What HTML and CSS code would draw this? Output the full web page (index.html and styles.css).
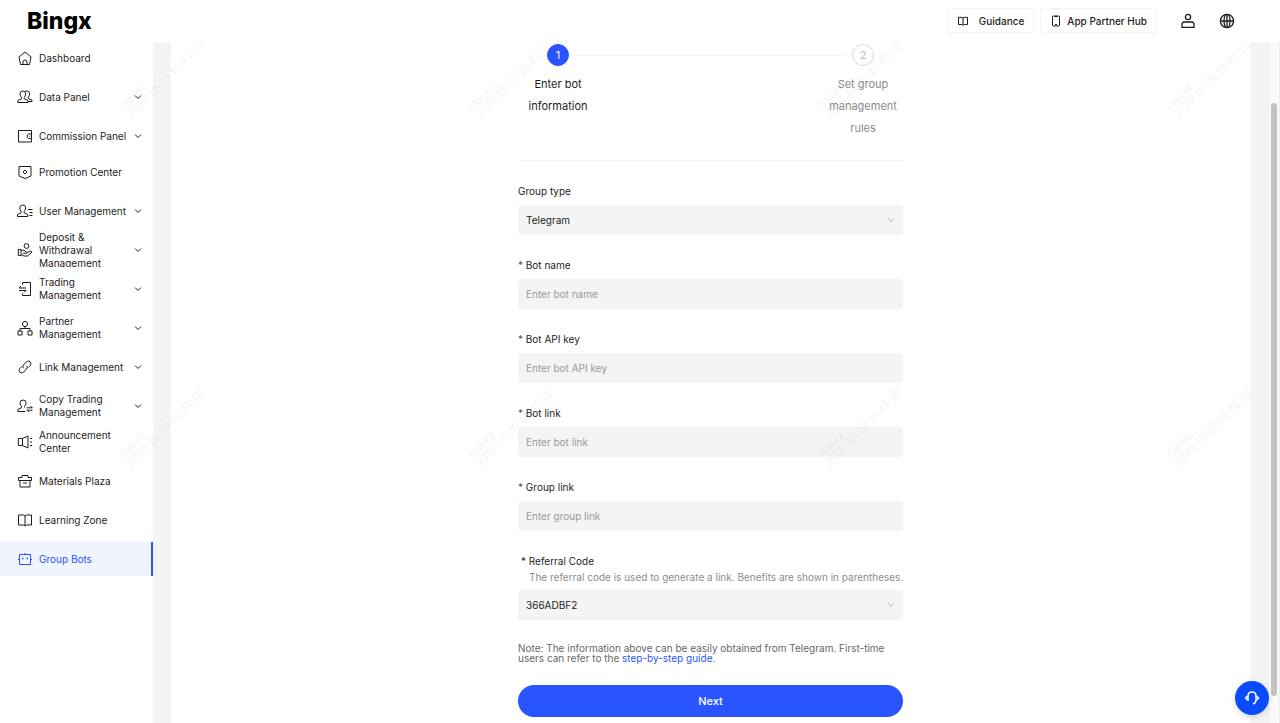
FILE: index.html
```html
<!DOCTYPE html>
<html lang="en">
<head>
    <meta charset="UTF-8">
    <meta name="viewport" content="width=device-width, initial-scale=1.0">
    <title>BingX - Group Bots</title>
    <link rel="stylesheet" href="styles.css">
</head>
<body>
    <header class="header">
        <a class="logo" href="#">Bingx</a>
        <div class="header-actions">
            <button class="header-button guidance" type="button">
                <svg class="small-icon" viewBox="0 0 12 12"><path d="M6 3Q5 2.300 4 2.300H1.500V9.500H4.500L6 10.200L7.500 9.500H10.500V2.300H8Q7 2.300 6 3ZM6 3V10"/></svg>
                Guidance
            </button>
            <button class="header-button" type="button">
                <svg class="small-icon" viewBox="0 0 12 12"><rect x="2.500" y="1" width="7" height="10" rx="1"/><path d="M4.500 1.500h3M5 9.500h2"/></svg>
                App Partner Hub
            </button>
        </div>
        <div class="header-links">
            <button class="icon-button" type="button" aria-label="Account">
                <svg class="icon bold" viewBox="0 0 16 16"><circle cx="8" cy="4" r="2.600"/><path d="M2 14.300V10.500L3.500 9H12.500L14 10.500V14.300Z"/></svg>
            </button>
            <button class="icon-button" type="button" aria-label="Language">
                <svg class="icon bold" viewBox="0 0 16 16"><circle cx="8" cy="8" r="6.600"/><ellipse cx="8" cy="8" rx="3" ry="6.600"/><path d="M1.400 8H14.600M8 1.400V14.600"/></svg>
            </button>
        </div>
    </header>

    <div class="layout">
        <nav class="sidebar">
            <ul class="menu">
                <li class="single"><a class="menu-item" href="#">
                    <svg class="icon" viewBox="0 0 16 16"><path d="M8 2L14 7L12.500 14.500H3.500L2 7ZM6 14.500V12a2 2 0 0 1 4 0V14.500"/></svg>
                    <span>Dashboard</span>
                </a></li>
                <li class="group"><a class="menu-item" href="#">
                    <svg class="icon" viewBox="0 0 16 16"><path d="M.800 13.500V11.500L4.500 9.800V8.500Q3 7 3 4.800Q3 2 5.800 2Q8.600 2 8.600 4.800Q8.600 7 7.200 8.500V9.800L11 11.500V13.500ZM8 2.300Q9 2 10 2Q12.600 2 12.600 4.800Q12.600 7 11.200 8.500V9.500L15 11V12.500H11"/></svg>
                    <span>Data Panel</span>
                    <svg class="chevron" viewBox="0 0 8 8"><path d="M1 2.500L4 5.500L7 2.500"/></svg>
                </a></li>
                <li class="group"><a class="menu-item" href="#">
                    <svg class="icon" viewBox="0 0 16 16"><path d="M14.500 6V2.500H1.500V14H14.500V10.500M14.500 6H11.500L10.200 7V9.500L11.500 10.500H14.500ZM12 8.200H13"/></svg>
                    <span>Commission Panel</span>
                    <svg class="chevron" viewBox="0 0 8 8"><path d="M1 2.500L4 5.500L7 2.500"/></svg>
                </a></li>
                <li class="single"><a class="menu-item" href="#">
                    <svg class="icon" viewBox="0 0 16 16"><path d="M2 2.500H14V12L8 14.500L2 12ZM8 6L10 8L8 10L6 8Z"/></svg>
                    <span>Promotion Center</span>
                </a></li>
                <li class="group"><a class="menu-item" href="#">
                    <svg class="icon" viewBox="0 0 16 16"><path d="M.500 13.500V11.500L4.200 9.800V8.500Q2.800 7 2.800 4.800Q2.800 2 5.700 2Q8.600 2 8.600 4.800Q8.600 7 7.200 8.500V9.800L10.800 11.500V13.500ZM11 6.500H15.500M12.500 9.500H15.500M12.500 12.500H15.500"/></svg>
                    <span>User Management</span>
                    <svg class="chevron" viewBox="0 0 8 8"><path d="M1 2.500L4 5.500L7 2.500"/></svg>
                </a></li>
                <li class="group"><a class="menu-item" href="#">
                    <svg class="icon" viewBox="0 0 16 16"><circle cx="9.500" cy="4" r="2.400"/><path d="M1.300 7.500H4V13.500H1.300ZM4 8.300H7L9 9.800Q10.300 10.500 9.500 11.300H6M10 10.500L13.500 9L15 10L10.500 14H7L4 12.500"/></svg>
                    <span>Deposit &amp; Withdrawal Management</span>
                    <svg class="chevron" viewBox="0 0 8 8"><path d="M1 2.500L4 5.500L7 2.500"/></svg>
                </a></li>
                <li class="group"><a class="menu-item" href="#">
                    <svg class="icon" viewBox="0 0 16 16"><path d="M5.500 3.500V1.500H13.500V14.500H5.500V12.500M4 5L2 7H9M2 9.500H9L7 11.500"/></svg>
                    <span>Trading Management</span>
                    <svg class="chevron" viewBox="0 0 8 8"><path d="M1 2.500L4 5.500L7 2.500"/></svg>
                </a></li>
                <li class="group"><a class="menu-item" href="#">
                    <svg class="icon" viewBox="0 0 16 16"><circle cx="8" cy="4" r="2.600"/><path d="M8 6.600V8.500M3 11V8.500H13V11M1 11H5V15H1ZM11 11H15V15H11Z"/></svg>
                    <span>Partner Management</span>
                    <svg class="chevron" viewBox="0 0 8 8"><path d="M1 2.500L4 5.500L7 2.500"/></svg>
                </a></li>
                <li class="group"><a class="menu-item" href="#">
                    <svg class="icon" viewBox="0 0 16 16"><path d="M6.500 9.200Q5 7.500 6.500 6L9.500 2.800Q11.300 1.300 13.200 2.800Q14.800 4.700 13.200 6.500L11 8.700M9.500 6.800Q11 8.500 9.500 10L6.500 13.200Q4.700 14.700 2.800 13.200Q1.200 11.300 2.800 9.500L5 7.300"/></svg>
                    <span>Link Management</span>
                    <svg class="chevron" viewBox="0 0 8 8"><path d="M1 2.500L4 5.500L7 2.500"/></svg>
                </a></li>
                <li class="group"><a class="menu-item" href="#">
                    <svg class="icon" viewBox="0 0 16 16"><path d="M8.500 13.500H.800V11.500L4.500 9.800V8.500Q3 7 3 4.800Q3 2 6 2Q9 2 9 4.800Q9 7 7.500 8.500V9.500M9.500 9.800H15.300L13.500 8M15.500 12.200H10L11.800 14"/></svg>
                    <span>Copy Trading Management</span>
                    <svg class="chevron" viewBox="0 0 8 8"><path d="M1 2.500L4 5.500L7 2.500"/></svg>
                </a></li>
                <li class="single"><a class="menu-item" href="#">
                    <svg class="icon" viewBox="0 0 16 16"><path d="M1.300 4.500H5.500L11 2V14L5.500 11.500H1.300ZM5.500 4.500V11.500M13 4.500H15M13 8H15M13 11.500H15"/></svg>
                    <span>Announcement Center</span>
                </a></li>
                <li class="single"><a class="menu-item" href="#">
                    <svg class="icon" viewBox="0 0 16 16"><path d="M1.500 4.500H5V2.500H11V4.500H14.500V7.500H1.500ZM3 7.500V14H13V7.500M6 10H10"/></svg>
                    <span>Materials Plaza</span>
                </a></li>
                <li class="single"><a class="menu-item" href="#">
                    <svg class="icon" viewBox="0 0 16 16"><path d="M8 4L6.500 3H1.500V13H6.500L8 14L9.500 13H14.500V3H9.500ZM8 4V14"/></svg>
                    <span>Learning Zone</span>
                </a></li>
                <li class="single"><a class="menu-item active" href="#" aria-current="page">
                    <svg class="icon" viewBox="0 0 16 16"><path d="M2.500 3.500H13.500V13.500H2.500ZM8 3.500V2M2.500 8.500H1M13.500 8.500H15"/><path class="eyes" d="M5 7.500H6.500M9.500 7.500H11"/></svg>
                    <span>Group Bots</span>
                </a></li>
            </ul>
        </nav>

        <main class="main">
            <section class="panel">
                <form class="bot-form">
                    <ol class="steps">
                        <li class="step current">
                            <span class="step-number">1</span>
                            <span>Enter bot information</span>
                        </li>
                        <li class="step-line" role="presentation"></li>
                        <li class="step">
                            <span class="step-number">2</span>
                            <span>Set group management rules</span>
                        </li>
                    </ol>

                    <div class="field">
                        <label for="group-type">Group type</label>
                        <div class="select-box">
                            <select id="group-type">
                                <option>Telegram</option>
                            </select>
                            <svg class="select-arrow" viewBox="0 0 8 8"><path d="M1 1.500L4 6L7 1.500"/></svg>
                        </div>
                    </div>
                    <div class="field">
                        <label for="bot-name"><span class="required">*</span> Bot name</label>
                        <input id="bot-name" type="text" placeholder="Enter bot name">
                    </div>
                    <div class="field">
                        <label for="api-key"><span class="required">*</span> Bot API key</label>
                        <input id="api-key" type="text" placeholder="Enter bot API key">
                    </div>
                    <div class="field">
                        <label for="bot-link"><span class="required">*</span> Bot link</label>
                        <input id="bot-link" type="text" placeholder="Enter bot link">
                    </div>
                    <div class="field">
                        <label for="group-link"><span class="required">*</span> Group link</label>
                        <input id="group-link" type="text" placeholder="Enter group link">
                    </div>
                    <div class="field">
                        <label class="referral-label" for="referral">* Referral Code</label>
                        <p class="hint">The referral code is used to generate a link. Benefits are shown in parentheses.</p>
                        <div class="select-box">
                            <select id="referral">
                                <option>366ADBF2</option>
                            </select>
                            <svg class="select-arrow" viewBox="0 0 8 8"><path d="M1 1.500L4 6L7 1.500"/></svg>
                        </div>
                    </div>

                    <p class="note">Note: The information above can be easily obtained from Telegram. First-time users can refer to the <a href="#">step-by-step guide.</a></p>
                    <button class="next-button" type="button">Next</button>
                </form>
            </section>
        </main>

        <div class="scrollbar"><div class="thumb"></div></div>
    </div>

    <div class="watermarks" aria-hidden="true">
        <p>clairez<br>2025-10-20 16:41:10</p>
        <p>clairez<br>2025-10-20 16:41:10</p>
        <p>clairez<br>2025-10-20 16:41:10</p>
        <p>clairez<br>2025-10-20 16:41:10</p>
        <p>clairez<br>2025-10-20 16:41:10</p>
        <p>clairez<br>2025-10-20 16:41:10</p>
        <p>clairez<br>2025-10-20 16:41:10</p>
        <p>clairez<br>2025-10-20 16:41:10</p>
    </div>

    <button class="support" type="button" aria-label="Customer support">
        <svg viewBox="0 0 16 16"><path d="M4 11V6Q4 2 8 2Q12 2 12 6V10Q12 13 9 14"/><path d="M3.500 6L1.500 8L3.500 10M12.500 6L14.500 8L12.500 10"/></svg>
    </button>
</body>
</html>
```

FILE: styles.css
```css
* {
    box-sizing: border-box;
}
body {
    margin: 0;
    height: 100vh;
    display: flex;
    flex-direction: column;
    overflow: hidden;
    background: white;
    color: #1c1c1c;
    font-family: Inter, "Liberation Sans", sans-serif;
    font-size: 10px;
}
button, input, select {
    font: inherit;
    color: inherit;
}
button {
    cursor: pointer;
}
a {
    text-decoration: none;
}
ul, ol, p {
    margin: 0;
    padding: 0;
    list-style: none;
}
svg {
    fill: none;
    stroke: currentColor;
    flex-shrink: 0;
}

/* Header */
.header {
    display: flex;
    align-items: center;
    flex: 0 0 42px;
    padding: 0 45px 1px 27px;
}
.logo {
    color: black;
    font-size: 23px;
    font-weight: 800;
    line-height: 24px;
}
.header-actions {
    display: flex;
    gap: 6px;
    margin-left: auto;
}
.header-button {
    display: flex;
    align-items: center;
    gap: 5px;
    height: 25px;
    padding: 0 9px;
    background: white;
    border: 1px solid #f3f3f3;
    border-radius: 4px;
    font-weight: 500;
}
.guidance {
    gap: 10px;
}
.small-icon {
    width: 12px;
    height: 12px;
}
.header-links {
    display: flex;
    gap: 23px;
    margin-left: 23px;
}
.icon-button {
    display: flex;
    padding: 0;
    border: none;
    background: none;
}
.icon {
    width: 16px;
    height: 16px;
}
.bold {
    stroke-width: 1.3;
}

/* Sidebar */
.layout {
    display: flex;
    flex: 1;
    min-height: 0;
}
.sidebar {
    width: 153px;
    flex-shrink: 0;
}
.menu {
    margin-top: -1px;
}
.menu li + li {
    margin-top: 5px;
}
.menu .group + .single {
    margin-top: 2px;
}
.menu-item {
    display: flex;
    align-items: center;
    gap: 6px;
    height: 34px;
    padding: 0 11px 0 17px;
    overflow: hidden;
    color: #1c1c1c;
    line-height: 13px;
}
.menu-item span {
    flex: 1;
}
.single .menu-item {
    padding-right: 24px;
}
.chevron {
    width: 8px;
    height: 8px;
}
.menu-item.active {
    color: #2954ff;
    background: #eff4ff;
    border-right: 2px solid #2954ff;
}
.eyes {
    stroke-width: 1.5;
}

/* Main */
.main {
    display: flex;
    flex: 1;
    padding: 0 18px;
    background: #f3f4f6;
}
.panel {
    flex: 1;
    padding: 2px 20px;
    background: white;
}
.bot-form {
    max-width: 385px;
    margin: 0 auto;
}
.steps {
    display: grid;
    grid-template-columns: 80px 1fr 80px;
    padding-bottom: 21px;
    margin-bottom: 20px;
    border-bottom: 1px solid #f3f3f3;
}
.step {
    display: flex;
    flex-direction: column;
    align-items: center;
    gap: 7px;
    color: #8c8c8c;
    font-size: 11px;
    line-height: 22px;
    text-align: center;
}
.step.current {
    color: #1c1c1c;
}
.step-number {
    width: 22px;
    height: 22px;
    border: 1px solid #d9d9d9;
    border-radius: 50%;
    color: #bfbfbf;
    line-height: 20px;
}
.current .step-number {
    background: #2954ff;
    border-color: #2954ff;
    color: white;
}
.step-line {
    height: 1px;
    margin: 11px -23px 0;
    background: #f3f3f3;
}
.field {
    display: flex;
    flex-direction: column;
    margin-bottom: 20px;
}
.field label {
    margin-bottom: 4px;
    line-height: 20px;
}
.required {
    color: #555;
}
.field input, .field select {
    width: 100%;
    height: 30px;
    padding: 0 8px;
    appearance: none;
    background: #f4f4f4;
    border: none;
    border-radius: 4px;
}
.field input::placeholder {
    color: #999;
}
.select-box {
    position: relative;
}
.select-arrow {
    position: absolute;
    top: 11px;
    right: 8px;
    width: 8px;
    height: 8px;
    color: #bfbfbf;
    pointer-events: none;
}
.field .referral-label {
    margin: 0 3px;
}
.hint {
    padding: 0 0 7px 11px;
    color: #8c8c8c;
    line-height: 12px;
    white-space: nowrap;
}
.note {
    margin: 23px 0 22px;
    color: #666;
    line-height: 10px;
}
.note a {
    color: #2954ff;
}
.next-button {
    width: 100%;
    height: 32px;
    border: none;
    border-radius: 16px;
    background: #2954ff;
    color: white;
    font-size: 11px;
    font-weight: 500;
}

.scrollbar {
    display: flex;
    width: 12px;
    padding: 61px 2px 27px;
    background: #fafafa;
    border: solid #ededed;
    border-width: 0 1px;
}
.thumb {
    flex: 1;
    border-radius: 4px;
    background: #c1c1c1;
}

/* Watermark and support button lie over the page */
.watermarks {
    position: fixed;
    top: 64px;
    left: 110px;
    display: grid;
    grid-template-columns: repeat(4, 349px);
    grid-auto-rows: 348px;
    color: rgba(0, 0, 0, 0.06);
    font-family: "Liberation Sans", sans-serif;
    font-size: 11px;
    line-height: 11px;
    pointer-events: none;
}
.watermarks p {
    width: 104px;
    height: 22px;
    white-space: nowrap;
    transform: rotate(-45deg);
}
.support {
    position: fixed;
    right: 11px;
    bottom: 8px;
    display: flex;
    align-items: center;
    justify-content: center;
    width: 34px;
    height: 34px;
    padding: 0;
    border: none;
    border-radius: 50%;
    background: #0a4bff;
    color: white;
    box-shadow: 0 2px 6px rgba(0, 0, 0, 0.15);
}
.support svg {
    width: 16px;
    height: 16px;
    stroke-width: 1.5;
}
```
